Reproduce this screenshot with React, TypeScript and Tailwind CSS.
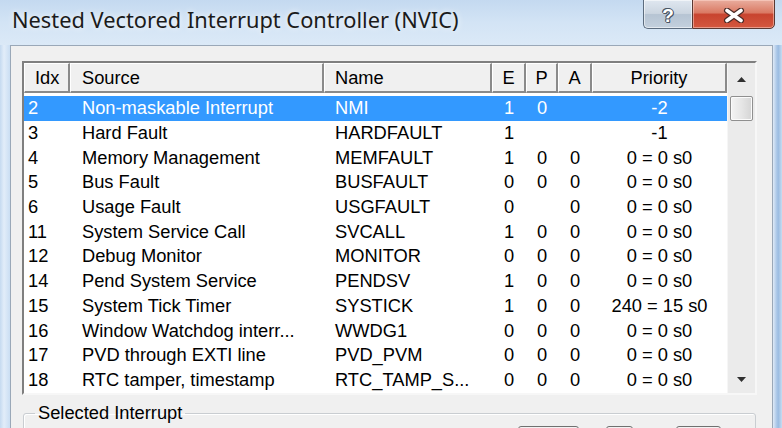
import React from "react";

type Row = [string, string, string, string, string, string, string];

const rows: Row[] = [
  ["2", "Non-maskable Interrupt", "NMI", "1", "0", "", "-2"],
  ["3", "Hard Fault", "HARDFAULT", "1", "", "", "-1"],
  ["4", "Memory Management", "MEMFAULT", "1", "0", "0", "0 = 0 s0"],
  ["5", "Bus Fault", "BUSFAULT", "0", "0", "0", "0 = 0 s0"],
  ["6", "Usage Fault", "USGFAULT", "0", "", "0", "0 = 0 s0"],
  ["11", "System Service Call", "SVCALL", "1", "0", "0", "0 = 0 s0"],
  ["12", "Debug Monitor", "MONITOR", "0", "0", "0", "0 = 0 s0"],
  ["14", "Pend System Service", "PENDSV", "1", "0", "0", "0 = 0 s0"],
  ["15", "System Tick Timer", "SYSTICK", "1", "0", "0", "240 = 15 s0"],
  ["16", "Window Watchdog interr...", "WWDG1", "0", "0", "0", "0 = 0 s0"],
  ["17", "PVD through EXTI line", "PVD_PVM", "0", "0", "0", "0 = 0 s0"],
  ["18", "RTC tamper, timestamp", "RTC_TAMP_S...", "0", "0", "0", "0 = 0 s0"],
];

const hdr =
  "h-full flex items-center bg-[#f0f0f0] border-t border-l border-t-white border-l-white border-r-2 border-b-2 border-r-[#8a8a8a] border-b-[#8a8a8a]";

export default function App() {
  return (
    <div className="w-[782px] h-[428px] overflow-hidden flex flex-col bg-[#cfe1f4] font-['Liberation_Sans',Arial,sans-serif]">
      {/* Title bar */}
      <div className="h-[45px] shrink-0 flex items-start justify-between bg-[linear-gradient(#c4d9f0,#d3e4f5_50%,#dbe9f7)]">
        <div className="pl-[12px] pt-[6px] text-[21.8px] leading-[28px] text-[#1b1b1b] font-['Noto_Sans',sans-serif] [text-shadow:0_0_6px_#ffffff]">
          Nested Vectored Interrupt Controller (NVIC)
        </div>
        <div className="flex mr-[7px] -mt-px h-[30px]">
          <div className="w-[49px] h-full flex items-center justify-center pt-[3px] border border-r-0 border-[#5c6c7e] rounded-bl-[5px] bg-[linear-gradient(#dfe7f0,#cbd5e0_48%,#b6c4d3_52%,#c3d0dd)] shadow-[inset_0_0_0_1px_rgba(255,255,255,0.55)]">
            <span className="text-[19px] leading-none font-bold text-white [text-shadow:1px_0_0_#4a5665,-1px_0_0_#4a5665,0_1px_0_#4a5665,0_-1px_0_#4a5665,1px_1px_0_#4a5665,-1px_-1px_0_#4a5665]">
              ?
            </span>
          </div>
          <div className="w-[83px] h-full flex items-center justify-center pt-[3px] border border-[#5a3832] rounded-br-[5px] bg-[linear-gradient(#e9ad9e,#da7a64_45%,#c8442f_52%,#d4583f)] shadow-[inset_0_0_0_1px_rgba(255,220,210,0.5)]">
            <svg width="22" height="15" viewBox="0 0 22 15">
              <path d="M4 2.5 L18 12.5 M18 2.5 L4 12.5" stroke="#4a2a26" strokeWidth="6" strokeLinecap="round" />
              <path d="M4 2.5 L18 12.5 M18 2.5 L4 12.5" stroke="#ffffff" strokeWidth="3.6" strokeLinecap="round" />
            </svg>
          </div>
        </div>
      </div>

      {/* Body */}
      <div className="flex-1 flex">
        <div className="w-[10px] shrink-0 bg-[linear-gradient(to_right,#c5daf0,#e2edf9_40%,#cadef3)]" />
        <div className="w-[763px] shrink-0 bg-[#f0f0f0] border-l border-t border-r border-[#9aa8b8] pl-[11px] pt-[15px] flex flex-col">
          {/* List view */}
          <div className="w-[735px] h-[334px] shrink-0 flex bg-white border-2 border-t-[#7f7f7f] border-l-[#7f7f7f] border-r-[#f7f7f7] border-b-[#f7f7f7]">
            <div className="w-[703px] flex flex-col text-[18.3px] leading-[20px] text-black">
              <div className="h-[30px] shrink-0 flex">
                <div className={`${hdr} w-[46px] pl-[10px]`}>Idx</div>
                <div className={`${hdr} w-[254px] pl-[11px]`}>Source</div>
                <div className={`${hdr} w-[168px] pl-[10px]`}>Name</div>
                <div className={`${hdr} w-[34px] justify-center`}>E</div>
                <div className={`${hdr} w-[32px] justify-center`}>P</div>
                <div className={`${hdr} w-[34px] justify-center`}>A</div>
                <div className={`${hdr} w-[135px] justify-center`}>Priority</div>
              </div>
              <div className="h-[3px] shrink-0" />
              {rows.map((r, i) => (
                <div
                  key={r[0]}
                  className={`h-[24.7px] shrink-0 flex items-center ${i === 0 ? "bg-[#3399ff] text-white" : "text-black"}`}
                >
                  <div className="w-[46px] pl-[4px]">{r[0]}</div>
                  <div className="w-[254px] pl-[12px] whitespace-nowrap">{r[1]}</div>
                  <div className="w-[168px] pl-[11px] whitespace-nowrap">{r[2]}</div>
                  <div className="w-[34px] text-center">{r[3]}</div>
                  <div className="w-[32px] text-center">{r[4]}</div>
                  <div className="w-[34px] text-center">{r[5]}</div>
                  <div className="w-[135px] text-center whitespace-nowrap">{r[6]}</div>
                </div>
              ))}
            </div>
            {/* Scrollbar */}
            <div className="w-[28px] shrink-0 flex flex-col bg-[#ebebeb] border-l border-[#f6f6f6]">
              <div className="h-[33px] shrink-0 flex items-center justify-center">
                <svg width="9" height="5" viewBox="0 0 9 5">
                  <path d="M0 5 L4.5 0 L9 5 Z" fill="#303030" />
                </svg>
              </div>
              <div className="h-[25px] shrink-0 mx-[2px] rounded-[2px] border border-[#8f8f8f] bg-[linear-gradient(to_right,#f4f4f4,#e6e6e6_50%,#d4d4d4)] shadow-[inset_0_0_0_1px_#fbfbfb]" />
              <div className="flex-1" />
              <div className="h-[28px] shrink-0 flex items-center justify-center">
                <svg width="9" height="5" viewBox="0 0 9 5">
                  <path d="M0 0 L4.5 5 L9 0 Z" fill="#303030" />
                </svg>
              </div>
            </div>
          </div>

          {/* Group box */}
          <fieldset className="mt-[8px] ml-px w-[733px] h-[100px] shrink-0 border border-[#c9cdd1] rounded-[3px] pl-[11px] shadow-[inset_1px_1px_0_#ffffff]">
            <legend className="px-[3px] text-[18.3px] leading-[20px] text-black">Selected Interrupt</legend>
            <div className="flex justify-end pr-[34px] mt-[3px]">
              <div className="w-[61px] h-[24px] mr-[27px] rounded-[3px] border border-[#707070] bg-[linear-gradient(#f2f2f2,#ebebeb_50%,#dddddd)]" />
              <div className="w-[27px] h-[24px] mr-[43px] rounded-[3px] border border-[#707070] bg-[linear-gradient(#f2f2f2,#ebebeb_50%,#dddddd)]" />
              <div className="w-[45px] h-[24px] rounded-[3px] border border-[#707070] bg-[linear-gradient(#f2f2f2,#ebebeb_50%,#dddddd)]" />
            </div>
          </fieldset>
        </div>
        <div className="w-[9px] shrink-0 bg-[linear-gradient(to_right,#dfeaf7,#a6c4e6_45%,#9cbde2_60%,#c7dcf1)]" />
      </div>
    </div>
  );
}
